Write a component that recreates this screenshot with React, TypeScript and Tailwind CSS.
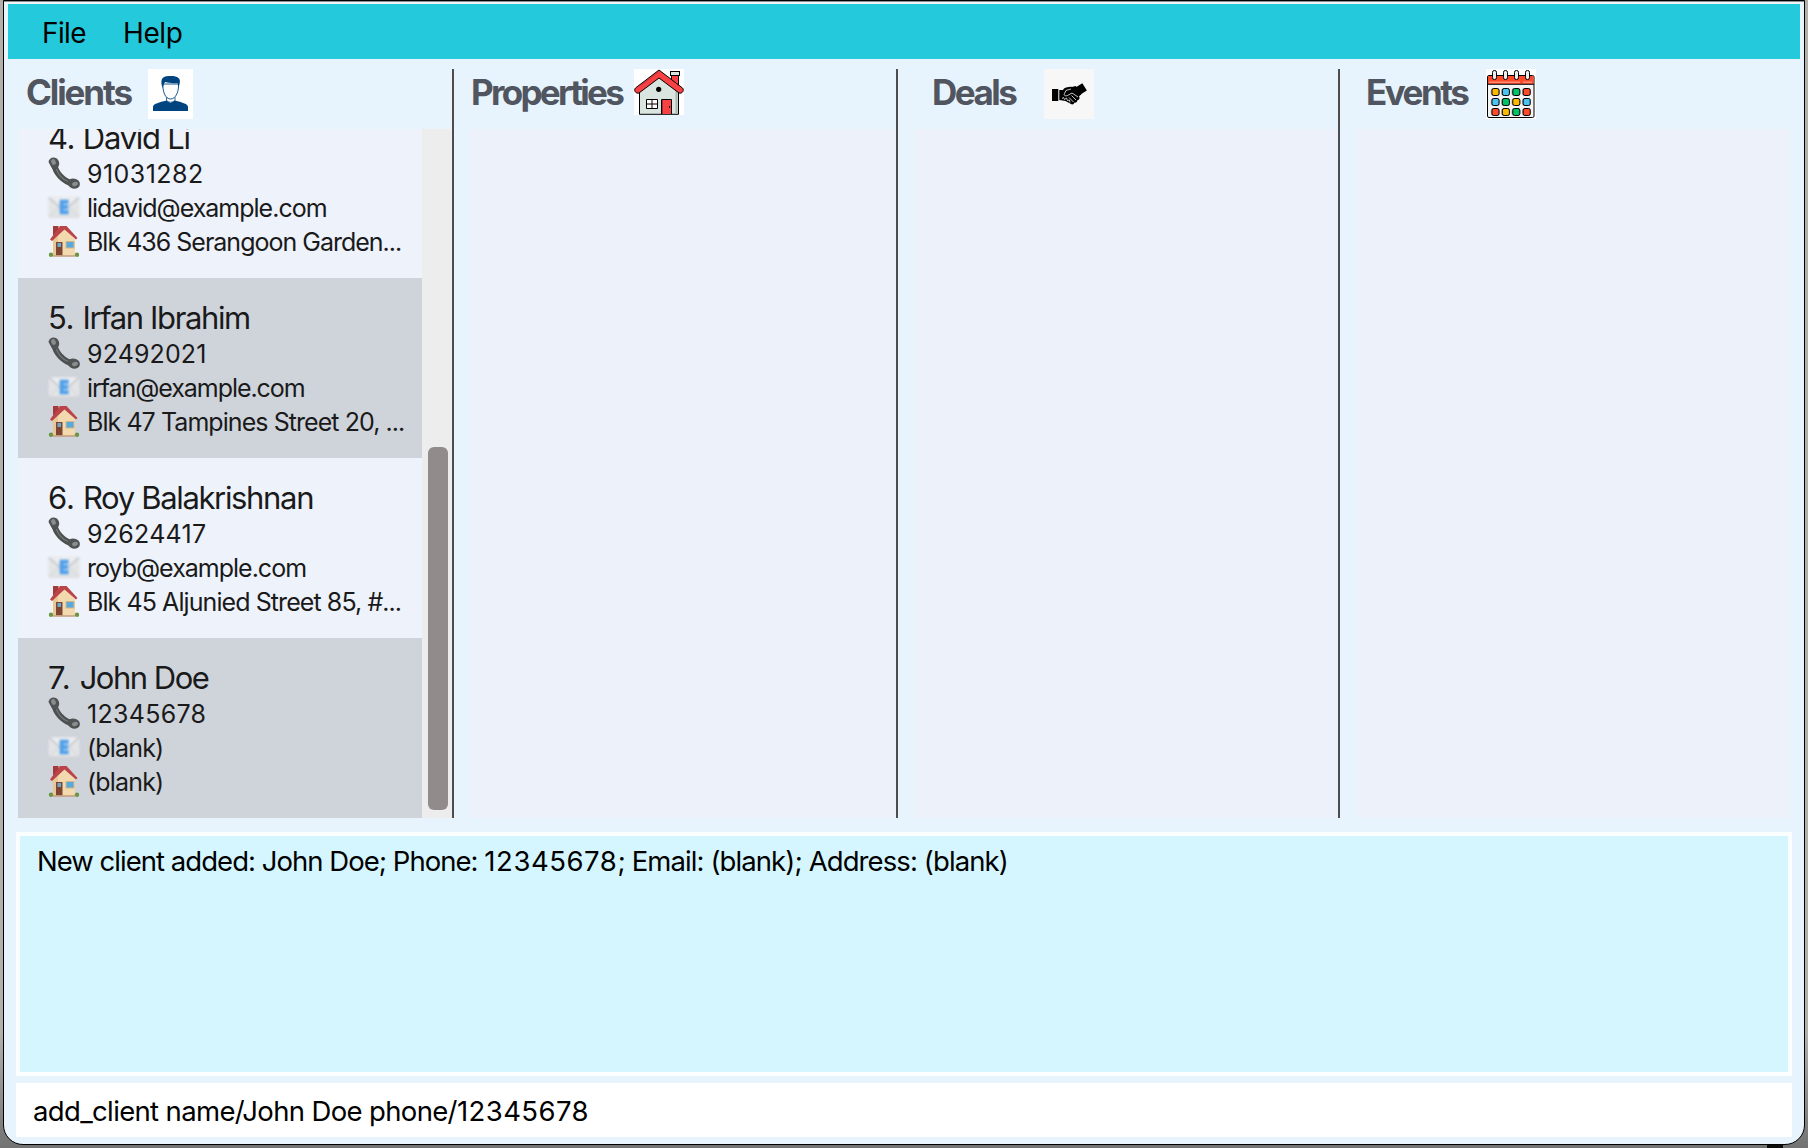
import React from 'react';

function PhoneIcon() {
  return (
    <svg width="32" height="34" viewBox="0 0 32 34" className="shrink-0 blur-[0.6px]">
      <path d="M6 6.500C7.500 16 15 24.500 26 27" fill="none" stroke="#4d5051" strokeWidth="6" />
      <path d="M0.500 5C1 1 5 -.5 8 1C11 2.500 12 7 10.500 9.500C8.500 12 5 12.500 3.500 10.500Z" fill="#505354" />
      <path d="M20.500 24C22 21 25.500 21 29 22.500C33 24.500 32.500 29.500 29.500 31C26 33 22 31 20.500 28.500Z" fill="#505354" />
      <ellipse cx="5.500" cy="5" rx="2.200" ry="3" fill="#8a8d8e" transform="rotate(-20 5.500 5)" />
      <ellipse cx="27" cy="27" rx="3" ry="2" fill="#8a8d8e" transform="rotate(-20 27 27)" />
      <path d="M8.500 12C10 17 14 22 20 24.500" fill="none" stroke="#757879" strokeWidth="1.200" />
    </svg>
  );
}

function MailIcon() {
  return (
    <svg width="32" height="34" viewBox="0 0 32 34" className="shrink-0 blur-[0.8px]">
      <rect x="0.500" y="6" width="31" height="20" rx="1" fill="#e2e4e6" />
      <path d="M1 25.500L12 15M31 25.500L20 15" stroke="#cfd1d4" strokeWidth="1" />
      <path d="M1 6.500L13.500 17.500Q16 19.500 18.500 17.500L31 6.500" fill="#ecedef" stroke="#bfc1c4" strokeWidth="1.200" />
      <path d="M0.500 26H31.500" stroke="#d0d2d5" strokeWidth="1" />
      <rect x="12" y="9" width="8.500" height="13.500" fill="#9cc8f1" />
      <path d="M20.500 10.500H13.500V21.500H20.500M13.500 16H19.500" fill="none" stroke="#4f9ee8" strokeWidth="3.600" />
    </svg>
  );
}

function HomeIcon() {
  return (
    <svg width="32" height="34" viewBox="0 0 32 34" className="shrink-0 blur-[0.6px]">
      <rect x="5" y="1" width="5.500" height="9" fill="#a33a3c" />
      <path d="M5 14L16 3.500L27 14V30.500H5Z" fill="#f3d9ae" />
      <path d="M5 14L10 9.500V30.500H5Z" fill="#e8c794" />
      <path d="M2 14.500L12 1H18.500L29.500 13L28 14.500L16.500 4.500L4 16Z" fill="#bb4448" />
      <rect x="8" y="17" width="6.500" height="13.500" fill="#7d4531" />
      <rect x="9.500" y="18" width="3.500" height="4" fill="#67a9cf" />
      <rect x="18" y="16.500" width="8" height="6.500" fill="#58a9dc" stroke="#d3b78c" strokeWidth="1" />
      <path d="M5 31H27" stroke="#c49d78" strokeWidth="1.500" />
      <circle cx="3" cy="29.700" r="2.200" fill="#6c9444" />
      <circle cx="29" cy="29.700" r="2.200" fill="#6c9444" />
    </svg>
  );
}

function ClientIcon() {
  return (
    <svg width="45" height="50" viewBox="0 0 45 50" className="shrink-0 bg-white">
      <path d="M5 42V37.500C6 34.500 11 33.500 18.500 31.500L22.500 34L27 31.500C34 33.500 39 34.500 40 37.500V42Z" fill="#00447f" />
      <path d="M18.500 28V31.500Q22.500 35 27 31.500V28" fill="#fff" stroke="#00447f" strokeWidth=".8" />
      <path d="M15 15C14.500 22 17 30 22.500 30C28 30 31 22 30.500 15Z" fill="#fff" stroke="#00447f" strokeWidth=".9" />
      <path d="M14.500 19C12.500 12 12.500 7 21 7C29 6.500 33.500 9 31.500 15L30.500 19L29.500 14C25 14.500 20 14 17.500 13C15.500 14 15.500 16 14.500 19Z" fill="#00447f" />
    </svg>
  );
}

function PropertyIcon() {
  return (
    <svg width="50" height="46" viewBox="0 0 50 46" className="shrink-0 bg-white">
      <rect x="37.500" y="5" width="7" height="13" fill="#f94144" stroke="#000" />
      <rect x="36.500" y="2.500" width="9" height="4" fill="#d9e4df" stroke="#000" />
      <path d="M5.500 20L25 7L44.500 20V45.300H5.500Z" fill="#dbe5df" stroke="#000" />
      <path d="M42.500 21V45" stroke="#a9b5af" strokeWidth="2" />
      <path d="M25 1L48.500 19C50.500 21 48.500 25 45 24L25 9L5 24C1.500 25 -.5 21 1.500 19Z" fill="#f94144" stroke="#000" strokeLinejoin="round" />
      <path d="M25 2.500L7 16.500" stroke="#c93438" strokeWidth="1" />
      <circle cx="24.700" cy="20.300" r="2.600" fill="#000" />
      <path d="M12.500 30.500H23.500V39.500H12.500ZM18 30.500V39.500M12.500 35H23.500" fill="#fff" stroke="#000" />
      <path d="M27.500 45V30.500H37.500V45" fill="#f94144" stroke="#000" />
      <path d="M28.500 31V45" stroke="#b02b2f" />
      <path d="M35.500 37V39" stroke="#000" />
    </svg>
  );
}

function DealIcon() {
  return (
    <svg width="50" height="50" viewBox="0 0 50 50" className="shrink-0 bg-[#f7f7f7]">
      <rect x="8" y="20" width="6.300" height="12" />
      <path d="M15.300 21L19 21L20 19.500C22.500 18.500 25 17.500 28 18L31.500 17L33.500 18.500L37.500 25L35 27.500C36.500 29.500 34.500 31.500 33.500 31C33.500 33 31.500 34 30.500 33.500C30 35.500 28 36 27 35L21.500 32L15.300 31Z" />
      <rect x="-4" y="-4.300" width="8" height="8.600" transform="translate(37.200 20) rotate(-32)" />
      <path d="M34 28L28 24L23.500 26.500C21 27.500 19.500 26 20.500 24.500L22 21.500L27 20" fill="none" stroke="#f7f7f7" strokeWidth=".8" />
      <path d="M25 28.500L29.500 33M27.500 26.500L32 31M18 29.500L19.500 28.500L20.500 30.500L22.500 29L23.500 31.500L25.500 31L26 33.500" fill="none" stroke="#f7f7f7" strokeWidth=".8" />
    </svg>
  );
}

const DOTS = [
  ['#fcb900', '#4cc3f1', '#00c267', '#ff4a2a'],
  ['#4cc3f1', '#00c267', '#fcb900', '#4cc3f1'],
  ['#ff4a2a', '#fcb900', '#00c267', '#ff4a2a'],
];

function EventIcon() {
  return (
    <svg width="50" height="50" viewBox="0 0 50 50" className="shrink-0 bg-white">
      <rect x="1.500" y="6.500" width="46.500" height="42" rx="1.500" fill="#f4f4f4" stroke="#000" />
      <path d="M2 15V7H47.500V15Z" fill="#ff4a2a" />
      <path d="M2 15.300H48" stroke="#000" />
      <path d="M3 13.200H34M37 13.200H46" stroke="#ffc3b5" strokeWidth=".8" />
      {[8.500, 19.500, 30.500, 41.500].map((x) => (
        <rect key={x} x={x - 2} y="1.500" width="4" height="9" rx="1.800" fill="#eee" stroke="#000" />
      ))}
      {DOTS.map((row, r) =>
        row.map((c, i) => (
          <g key={`${r}-${i}`}>
            <rect x={4.700 + i * 10.400} y={19 + r * 10} width="9" height="8" rx="3" fill="#aaa" />
            <rect x={6 + i * 10.400} y={19.500 + r * 10} width="7" height="7" rx="1.800" fill={c} stroke="#000" />
          </g>
        )),
      )}
    </svg>
  );
}

type Client = {
  index: string; indexCls: string;
  name: string; nameCls: string;
  phone: string; phoneCls: string;
  email: string; emailCls: string;
  address: string; addressCls: string;
};

const CLIENTS: Client[] = [
  { index: '4. ', indexCls: 'tracking-[-0.6px]', name: 'David Li', nameCls: 'tracking-[-1.27px]', phone: '91031282', phoneCls: 'tracking-[0.45px]', email: 'lidavid@example.com', emailCls: 'tracking-[-1px]', address: 'Blk 436 Serangoon Garden...', addressCls: 'tracking-[-1px]' },
  { index: '5. ', indexCls: 'tracking-[-0.4px]', name: 'Irfan Ibrahim', nameCls: 'tracking-[-1.38px]', phone: '92492021', phoneCls: 'tracking-[0.14px]', email: 'irfan@example.com', emailCls: 'tracking-[-1.06px]', address: 'Blk 47 Tampines Street 20, ...', addressCls: 'tracking-[-0.94px]' },
  { index: '6. ', indexCls: 'tracking-[-0.3px]', name: 'Roy Balakrishnan', nameCls: 'tracking-[-1.34px]', phone: '92624417', phoneCls: 'tracking-[0.27px]', email: 'royb@example.com', emailCls: 'tracking-[-1px]', address: 'Blk 45 Aljunied Street 85, #...', addressCls: 'tracking-[-0.92px]' },
  { index: '7. ', indexCls: 'tracking-[0.1px]', name: 'John Doe', nameCls: 'tracking-[-1.5px]', phone: '12345678', phoneCls: 'tracking-[0.29px]', email: '(blank)', emailCls: 'tracking-[-0.82px]', address: '(blank)', addressCls: 'tracking-[-0.82px]' },
];

function Detail({ icon, text, cls }: { icon: React.ReactNode; text: string; cls: string }) {
  return (
    <div className="flex h-[34px] gap-[7px] text-[25px] leading-[34px]">
      {icon}
      <span className={cls}>{text}</span>
    </div>
  );
}

function ClientRow({ client }: { client: Client }) {
  return (
    <li className="h-[180px] shrink-0 pl-[30px] pt-[21px] whitespace-nowrap text-[#1a1a1a] odd:bg-[#eef2fa] even:bg-[#cfd3da]">
      <div className="text-[31px] leading-[38px] whitespace-pre">
        <span className={client.indexCls}>{client.index}</span>
        <span className={client.nameCls}>{client.name}</span>
      </div>
      <Detail icon={<PhoneIcon />} text={client.phone} cls={client.phoneCls} />
      <Detail icon={<MailIcon />} text={client.email} cls={client.emailCls} />
      <Detail icon={<HomeIcon />} text={client.address} cls={client.addressCls} />
    </li>
  );
}

function Heading({ text, cls, icon }: { text: string; cls: string; icon: React.ReactNode }) {
  return (
    <div className="flex h-[60px] shrink-0 items-start text-[35px] leading-[46px] font-bold text-[#505560]">
      <h2 className={`shrink-0 ${cls}`}>{text}</h2>
      {icon}
    </div>
  );
}

export default function App() {
  return (
    <div className="h-[1148px] w-[1808px] overflow-hidden bg-linear-to-b from-[#b3b0ac] from-90% to-[#737373] pl-[3px] font-['Inter',sans-serif] text-black">
      <div className="flex h-[1145px] w-[1802px] flex-col rounded-b-[20px] border border-black bg-[#e7f4fd]">
        <div className="h-[3px] shrink-0 border-t border-[#8b9095] bg-[#eef4f8]" />
        <nav className="mr-1 ml-1 flex h-[55px] shrink-0 gap-[37px] bg-[#24cadb] pt-[2px] pl-[34px] text-[28px] leading-[54px]">
          <span className="w-[44px] tracking-[-0.6px]">File</span>
          <span className="tracking-[-0.4px]">Help</span>
        </nav>

        <main className="mt-[10px] flex h-[749px] shrink-0">
          <section className="flex w-[450px] flex-col border-r-2 border-[#4d4d4d]">
            <Heading text="Clients" cls="ml-[22px] w-[122px] tracking-[-2.1px]" icon={<ClientIcon />} />
            <div className="ml-[14px] flex min-h-0 flex-1">
              <ul className="flex w-[404px] shrink-0 flex-col justify-end overflow-hidden">
                {CLIENTS.map((c) => (
                  <ClientRow key={c.name} client={c} />
                ))}
              </ul>
              <div className="flex flex-1 flex-col justify-end bg-[#ededed] pr-1 pb-2 pl-[6px]">
                <div className="h-[363px] w-5 rounded-[6px] bg-[#928b8b]" />
              </div>
            </div>
          </section>
          <section className="flex w-[444px] flex-col border-r-2 border-[#4d4d4d]">
            <Heading text="Properties" cls="ml-[17px] w-[163px] tracking-[-2.7px]" icon={<PropertyIcon />} />
            <div className="ml-[16px] flex-1 bg-[#edf1fa]" />
          </section>
          <section className="flex w-[442px] flex-col border-r-2 border-[#4d4d4d]">
            <Heading text="Deals" cls="ml-[34px] w-[112px] tracking-[-2.5px]" icon={<DealIcon />} />
            <div className="ml-[16px] flex-1 bg-[#edf1fa]" />
          </section>
          <section className="flex w-[450px] flex-col">
            <Heading text="Events" cls="ml-[26px] w-[120px] tracking-[-2.5px]" icon={<EventIcon />} />
            <div className="ml-[16px] flex-1 bg-[#edf1fa]" />
          </section>
        </main>

        <div className="mt-[14px] ml-3 h-[244px] w-[1776px] shrink-0 border-4 border-[#fbfeff] bg-[#d5f6fe] pt-2 pl-[17px] text-[27.5px] leading-[34px] whitespace-pre">
          <span className="tracking-[-0.97px]">New client added: John Doe; Phone: </span>
          <span className="tracking-[0.55px]">12345678</span>
          <span className="tracking-[-0.9px]">; Email: (blank); Address: (blank)</span>
        </div>
        <div className="mt-[7px] ml-3 h-[54px] w-[1776px] shrink-0 bg-white pt-px pl-[17px] text-[27.5px] leading-[54px] whitespace-pre">
          <span className="tracking-[-0.65px]">add_client name/John Doe phone/</span>
          <span className="tracking-[0.44px]">12345678</span>
        </div>
      </div>
      <div className="ml-[1764px] h-[3px] w-4 bg-[#0c0e0c]" />
    </div>
  );
}
